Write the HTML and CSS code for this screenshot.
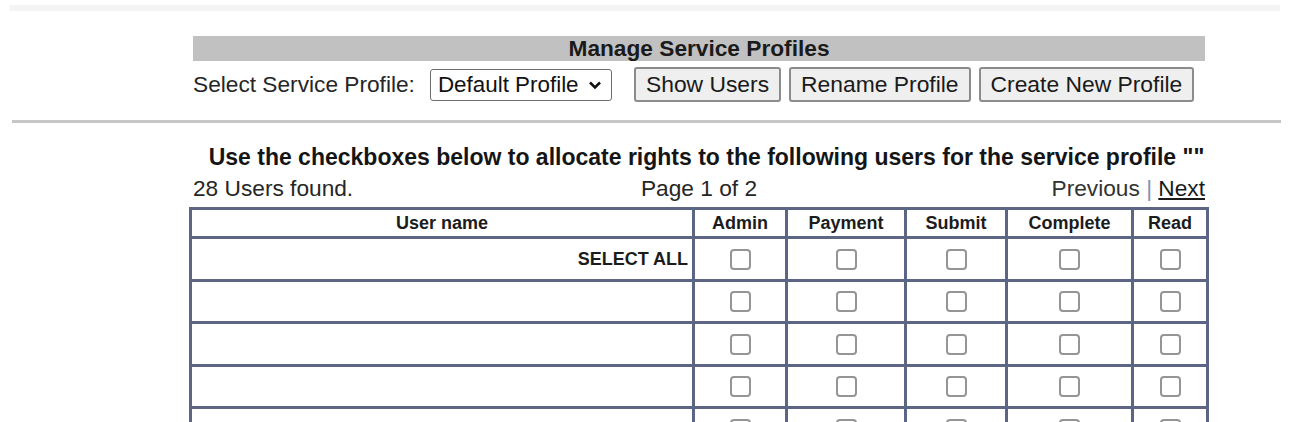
FILE: index.html
```html
<!DOCTYPE html>
<html>
<head>
<meta charset="utf-8">
<title>Manage Service Profiles</title>
<link rel="stylesheet" href="styles.css">
</head>
<body>
<div class="topband"></div>

<div class="manage">
  <div class="bar">Manage Service Profiles</div>
  <div class="controls">
    <label class="lbl" for="profile">Select Service Profile:</label>
    <span class="selwrap">
      <select id="profile" class="sel"><option>Default Profile</option></select>
      <svg class="chev" width="14" height="10" viewBox="0 0 14 10"><path d="M2 2.5 L7 7.5 L12 2.5" fill="none" stroke="#111" stroke-width="2.6"/></svg>
    </span>
    <button class="btn first">Show Users</button>
    <button class="btn">Rename Profile</button>
    <button class="btn">Create New Profile</button>
  </div>
</div>

<div class="rule"></div>

<div class="users">
  <div class="title">Use the checkboxes below to allocate rights to the following users for the service profile ""</div>
  <div class="info">
    <span class="found">28 Users found.</span>
    <span class="page">Page 1 of 2</span>
    <span class="nav">Previous <span class="sep">|</span> <a href="#" class="next">Next</a></span>
  </div>
  <table class="grid">
    <colgroup>
      <col class="c-user"><col class="c-admin"><col class="c-pay"><col class="c-sub"><col class="c-comp"><col class="c-read">
    </colgroup>
    <thead>
      <tr><th>User name</th><th>Admin</th><th>Payment</th><th>Submit</th><th>Complete</th><th>Read</th></tr>
    </thead>
    <tbody>
      <tr class="r43"><td class="selall">SELECT ALL</td><td><input type="checkbox" class="cb"></td><td><input type="checkbox" class="cb"></td><td><input type="checkbox" class="cb"></td><td><input type="checkbox" class="cb"></td><td><input type="checkbox" class="cb"></td></tr>
      <tr class="r42"><td></td><td><input type="checkbox" class="cb"></td><td><input type="checkbox" class="cb"></td><td><input type="checkbox" class="cb"></td><td><input type="checkbox" class="cb"></td><td><input type="checkbox" class="cb"></td></tr>
      <tr class="r43"><td></td><td><input type="checkbox" class="cb"></td><td><input type="checkbox" class="cb"></td><td><input type="checkbox" class="cb"></td><td><input type="checkbox" class="cb"></td><td><input type="checkbox" class="cb"></td></tr>
      <tr class="r42"><td></td><td><input type="checkbox" class="cb"></td><td><input type="checkbox" class="cb"></td><td><input type="checkbox" class="cb"></td><td><input type="checkbox" class="cb"></td><td><input type="checkbox" class="cb"></td></tr>
      <tr class="r43"><td></td><td><input type="checkbox" class="cb"></td><td><input type="checkbox" class="cb"></td><td><input type="checkbox" class="cb"></td><td><input type="checkbox" class="cb"></td><td><input type="checkbox" class="cb"></td></tr>
      <tr class="r42"><td></td><td><input type="checkbox" class="cb"></td><td><input type="checkbox" class="cb"></td><td><input type="checkbox" class="cb"></td><td><input type="checkbox" class="cb"></td><td><input type="checkbox" class="cb"></td></tr>
    </tbody>
  </table>
</div>
</body>
</html>
```

FILE: styles.css
```css
html, body {
  margin: 0;
  padding: 0;
  background: #ffffff;
}

body {
  font-family: "Liberation Sans", Arial, sans-serif;
  font-size: 22.7px;
  color: #1a1a1a;
}

.topband {
  margin: 5px 11px 0 10px;
  height: 6px;
  background: #f4f4f4;
}

.manage {
  margin: 25px 0 0 193px;
  width: 1012px;
}

.bar {
  height: 25px;
  line-height: 25px;
  background: #c1c1c1;
  text-align: center;
  font-weight: bold;
  color: #1a1a1a;
}

.controls {
  display: flex;
  align-items: center;
  margin-top: 6px;
  height: 35px;
  white-space: nowrap;
}

.controls > * {
  flex-shrink: 0;
}

.lbl {
  color: #262626;
  margin-right: 15px;
}

.selwrap {
  position: relative;
  display: inline-block;
  height: 32px;
  margin-right: 22px;
}

.sel {
  appearance: none;
  -webkit-appearance: none;
  box-sizing: border-box;
  width: 182px;
  height: 32px;
  margin: 0;
  padding: 0 0 0 7px;
  font-family: inherit;
  font-size: 22.4px;
  color: #111;
  background: #fff;
  border: 1.5px solid #6e6e6e;
  border-radius: 3px;
}

.chev {
  position: absolute;
  right: 10px;
  top: 11px;
  pointer-events: none;
}

.btn {
  box-sizing: border-box;
  height: 35px;
  margin: 0 8px 0 0;
  padding: 0 10px;
  font-family: inherit;
  font-size: 22.85px;
  white-space: nowrap;
  color: #1a1a1a;
  background: #efefef;
  border: 2px solid #8c8c8c;
  border-radius: 3px;
}

.rule {
  margin: 18px 10px 0 12px;
  height: 3px;
  background: #c7c7c7;
}

.users {
  margin-left: 189px;
  width: 1021px;
}

.title {
  margin: 21px 0 0 4px;
  width: 1012px;
  padding-left: 15px;
  box-sizing: border-box;
  text-align: center;
  font-size: 23px;
  font-weight: bold;
  line-height: 27px;
  white-space: nowrap;
  color: #151515;
}

.info {
  display: grid;
  grid-template-columns: 1fr auto 1fr;
  margin: 5px 0 7px 4px;
  width: 1012px;
  line-height: 24px;
  color: #262626;
}

.found {
  justify-self: start;
}

.page {
  justify-self: center;
}

.nav {
  justify-self: end;
  color: #333;
}

.sep {
  color: #7f90b8;
}

.next {
  color: #1a1a1a;
  text-decoration: underline;
}

.grid {
  border-collapse: collapse;
  table-layout: fixed;
  width: 1020px;
  border: 3px solid #5c6584;
}

.c-user { width: 503px; }
.c-admin { width: 93px; }
.c-pay { width: 119px; }
.c-sub { width: 101px; }
.c-comp { width: 126px; }
.c-read { width: 75px; }

.grid th,
.grid td {
  border: 3px solid #5c6584;
  padding: 0;
  text-align: center;
  vertical-align: middle;
}

.grid th {
  height: 26px;
  font-size: 18px;
  font-weight: bold;
  color: #1c1c1c;
}

.grid .r43 td { height: 40px; }
.grid .r42 td { height: 39px; }

.grid td.selall {
  text-align: right;
  padding-right: 4px;
  font-size: 18px;
  font-weight: bold;
  color: #1c1c1c;
}

.cb {
  appearance: none;
  -webkit-appearance: none;
  display: block;
  box-sizing: border-box;
  width: 21px;
  height: 21px;
  margin: 0 auto;
  background: #fff;
  border: 2px solid #959595;
  border-radius: 4px;
}
```
